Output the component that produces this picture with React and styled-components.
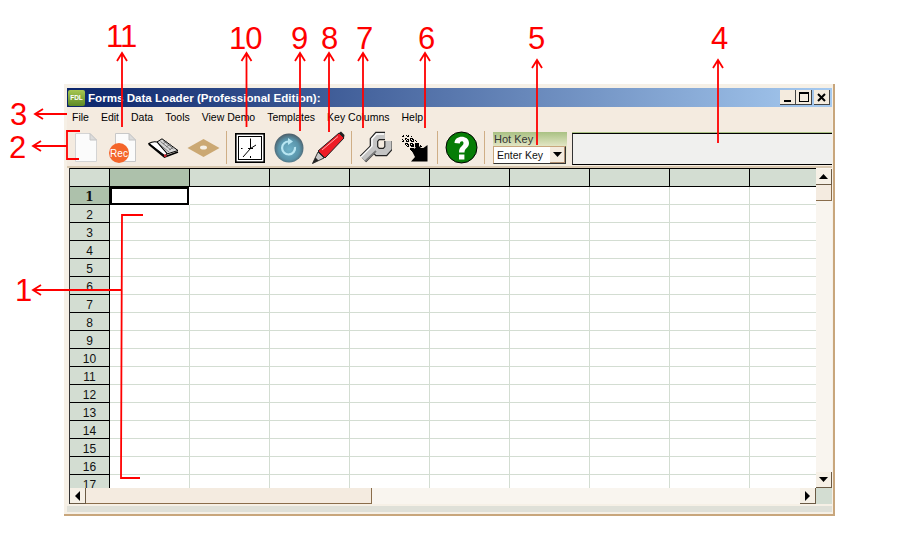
import styled, { createGlobalStyle } from "styled-components";

const GlobalStyle = createGlobalStyle`
  html, body {
    margin: 0;
    padding: 0;
    background: #fff;
  }
`;

const COLS = [0, 1, 2, 3, 4, 5, 6, 7, 8];
const ROWS = Array.from({ length: 17 }, (_, i) => i + 1);
const MENU = ["File", "Edit", "Data", "Tools", "View Demo", "Templates", "Key Columns", "Help"];

const NUMBERS = [
  { n: "11", x: 106, y: 19 },
  { n: "10", x: 229, y: 21 },
  { n: "9", x: 291, y: 21 },
  { n: "8", x: 321, y: 21 },
  { n: "7", x: 356, y: 21 },
  { n: "6", x: 418, y: 21 },
  { n: "5", x: 528, y: 21 },
  { n: "4", x: 711, y: 21 },
  { n: "3", x: 10, y: 97 },
  { n: "2", x: 9, y: 130 },
  { n: "1", x: 15, y: 273 },
];

// speckle for the import icon, dissolving toward the top left
const SPECKLE = [];
for (let y = 1; y < 22; y++) {
  for (let x = 0; x < 22; x++) {
    const band = Math.abs(x - y);
    const hash = (x * 7 + y * 13 + x * y) % 5;
    if (band < 8 && hash < (x + y > 20 ? 4 : x + y > 10 ? 3 : 2)) SPECKLE.push([x, y]);
  }
}

const Page = styled.div`
  position: relative;
  width: 900px;
  height: 560px;
  padding: 84px 0 0 64px;
  box-sizing: border-box;
  overflow: hidden;
  font-family: "Liberation Sans", Arial, sans-serif;
`;

const Window = styled.div`
  width: 771px;
  height: 432px;
  box-sizing: border-box;
  padding: 4px 1px 0 3px;
  background: #f6f0e6;
  border-right: 2px solid #c8a67c;
  border-bottom: 2px solid #c8a67c;
  display: flex;
  flex-direction: column;
`;

const TitleBar = styled.div`
  height: 19px;
  flex: none;
  display: flex;
  align-items: center;
  padding: 0 2px 0 1px;
  background: linear-gradient(90deg, #0a246a, #a6caf0);
`;

const AppIcon = styled.div`
  width: 17px;
  height: 16px;
  border-radius: 2px;
  background: linear-gradient(180deg, #a6c752, #5d8a26);
  color: #fff;
  font-size: 6.5px;
  font-weight: bold;
  line-height: 16px;
  text-align: center;
  flex: none;
`;

const TitleText = styled.div`
  margin-left: 3px;
  color: #fff;
  font-size: 11.6px;
  font-weight: bold;
  white-space: nowrap;
  flex: 1;
`;

const WinButton = styled.div`
  width: 16px;
  height: 15px;
  margin-left: ${(p) => (p.$gap ? "2px" : "0")};
  background: #f4ebde;
  border-right: 1px solid #444;
  border-bottom: 1px solid #444;
  box-sizing: border-box;
  display: flex;
  align-items: center;
  justify-content: center;
`;

const MenuBar = styled.div`
  height: 24px;
  box-sizing: border-box;
  flex: none;
  display: flex;
  align-items: center;
  gap: 12px;
  padding: 0 0 4px 5px;
  background: #f4ebe0;
`;

const MenuItem = styled.span`
  font-size: 10.5px;
  color: #000;
`;

const ToolBar = styled.div`
  height: 35px;
  flex: none;
  display: flex;
  align-items: flex-start;
  background: #f4ebe0;
  border-bottom: 2px solid #d8c8b0;
`;

const Tool = styled.div`
  width: ${(p) => p.$w}px;
  height: 33px;
  margin-left: ${(p) => p.$ml || 0}px;
  flex: none;
  display: flex;
  align-items: center;
  justify-content: center;
`;

const Sep = styled.div`
  width: 1px;
  height: 33px;
  margin-left: ${(p) => p.$ml}px;
  background: #cfae86;
  flex: none;
`;

const HotKey = styled.div`
  width: 74px;
  height: 33px;
  margin: 1px 0 0 8px;
  flex: none;
  display: flex;
  flex-direction: column;
  background: linear-gradient(180deg, #a9c183, #e6e8c8 45%, #f1efdd);
`;

const HotKeyLabel = styled.div`
  height: 14px;
  padding-left: 1px;
  font-size: 11px;
  line-height: 15px;
  color: #333;
`;

const HotKeySelect = styled.div`
  width: 73px;
  height: 18px;
  box-sizing: border-box;
  background: #fff;
  border: 1px solid #c8a67c;
  border-right-color: #333;
  border-bottom-color: #333;
  display: flex;
  align-items: center;
  justify-content: space-between;
  padding-left: 3px;
  font-size: 10.5px;
  color: #111;
`;

const DropButton = styled.div`
  width: 15px;
  height: 16px;
  background: #f4ebde;
  border-right: 1px solid #b09070;
  border-bottom: 1px solid #b09070;
  display: flex;
  align-items: center;
  justify-content: center;
  box-sizing: border-box;
`;

const StatusPanel = styled.div`
  flex: 1;
  height: 32px;
  margin: 2px 0 0 5px;
  background: #f0f0ee;
  border-top: 1px solid #000;
  border-bottom: 1px solid #000;
  border-left: 1px solid #333;
  box-sizing: border-box;
  box-shadow: 0 -1px 0 #a9c183;
`;

const Body = styled.div`
  height: 336px;
  flex: none;
  display: grid;
  grid-template-columns: 746px 16px;
  grid-template-rows: 320px 16px;
  margin-left: 2px;
  border-left: 1px solid #333;
`;

const Sheet = styled.div`
  overflow: hidden;
  background: #fff;
  border-top: 1px solid #000;
  box-sizing: border-box;
`;

const Row = styled.div`
  display: flex;
  height: 18px;
`;

const HeadCell = styled.div`
  width: 79px;
  flex: none;
  height: 17px;
  background: ${(p) => (p.$on ? "#adc1ab" : "#d3ddd2")};
  border-right: 1px solid #000;
  border-bottom: 1px solid #000;
`;

const RowHead = styled.div`
  width: 39px;
  flex: none;
  height: 17px;
  background: ${(p) => (p.$on ? "#adc1ab" : "#d3ddd2")};
  border-right: 1px solid #000;
  border-bottom: 1px solid #000;
  text-align: center;
  font-family: ${(p) => (p.$on ? '"DejaVu Serif", serif' : '"Liberation Sans", sans-serif')};
  font-weight: ${(p) => (p.$on ? "bold" : "normal")};
  font-size: 12px;
  line-height: 20px;
  color: #111;
`;

const Cell = styled.div`
  width: 79px;
  flex: none;
  height: 17px;
  background: #fff;
  border-right: 1px solid #d3ddd2;
  border-bottom: 1px solid #d3ddd2;
`;

const ActiveCell = styled.div`
  width: 79px;
  height: 18px;
  flex: none;
  box-sizing: border-box;
  margin-right: 1px;
  border: 2px solid #000;
  background: #fff;
`;

const VScroll = styled.div`
  background: #f9f5ef;
  display: flex;
  flex-direction: column;
  padding-top: 1px;
`;

const HScroll = styled.div`
  background: #f9f5ef;
  display: flex;
  align-items: stretch;
`;

const ScrollBtn = styled.div`
  width: 16px;
  height: 16px;
  flex: none;
  box-sizing: border-box;
  background: #f6f0e6;
  border-right: 1px solid #6b5a44;
  border-bottom: 1px solid #6b5a44;
  display: flex;
  align-items: center;
  justify-content: center;
`;

const Thumb = styled.div`
  flex: none;
  width: ${(p) => p.$w}px;
  height: 16px;
  box-sizing: border-box;
  background: #f4ebe0;
  border-right: 1px solid #8a6d4b;
  border-bottom: 1px solid #8a6d4b;
`;

const Spacer = styled.div`
  flex: 1;
`;

const Corner = styled.div`
  background: #d3ddd2;
`;

const StatusLine = styled.div`
  height: 6px;
  margin-top: 2px;
  background: #dfe0d8;
`;

const Overlay = styled.svg`
  position: absolute;
  left: 0;
  top: 0;
  pointer-events: none;
`;

const Num = styled.span.attrs((p) => ({ style: { left: p.$x, top: p.$y } }))`
  position: absolute;
  color: #f00;
  font-family: "Liberation Sans", sans-serif;
  font-size: 31px;
  line-height: 36px;
  letter-spacing: -1px;
`;

const Tri = ({ dir }) => {
  const pts = { up: "0,6 4.5,1 9,6", down: "0,1 9,1 4.5,6", left: "6,0 6,10 1,5", right: "1,0 1,10 6,5" }[dir];
  const vert = dir === "up" || dir === "down";
  return (
    <svg width={vert ? 9 : 7} height={vert ? 7 : 10} viewBox={vert ? "0 0 9 7" : "0 0 7 10"}>
      <polygon points={pts} fill="#000" />
    </svg>
  );
};

const DocIcon = () => (
  <svg width="22" height="29" viewBox="0 0 22 29">
    <path d="M.5.5H15L21.5 7V28.5H.5Z" fill="#fbfbfb" stroke="#d4d4d4" />
    <path d="M15 .5V7H21.5Z" fill="#dcdcdc" stroke="#c4c4c4" />
  </svg>
);

const RecIcon = () => (
  <svg width="30" height="30" viewBox="0 0 30 30">
    <path d="M7.5.5H21L27.5 7V28.5H7.5Z" fill="#fbfbfb" stroke="#c8c8c8" />
    <path d="M21 .5V7H27.5Z" fill="#dcdcdc" stroke="#c4c4c4" />
    <circle cx="11" cy="20" r="10" fill="#f4652a" />
    <text x="11" y="24" textAnchor="middle" fontSize="10" fill="#fff" fontFamily="Liberation Sans">Rec</text>
  </svg>
);

const BookIcon = () => (
  <svg width="31" height="20" viewBox="0 0 31 20">
    <path d="M14 .8L30 12.5L19 16L9 4Z" fill="#d8d8d8" stroke="#000" />
    <path d="M12.5 3.5L23 12M15 2.5L25.5 11M11 6L21 14M15 6L19 3M18 9L23 6M21 12L26 9" stroke="#666" strokeWidth=".8" />
    <path d="M.8 5.5C4 3.5 7 3.5 9 4L19 15.5L17 18Z" fill="#fff" stroke="#000" strokeWidth="1.1" />
    <path d="M.8 6L16.5 19L30 14" fill="none" stroke="#000" strokeWidth="1.7" />
    <rect x="16" y="16.5" width="2.4" height="2.4" fill="#c8202c" />
  </svg>
);

const DiamondIcon = () => (
  <svg width="33" height="18" viewBox="0 0 33 18">
    <path d="M16.5 0L32.5 9L16.5 18L.5 9Z" fill="#cba873" />
    <ellipse cx="16.5" cy="8.5" rx="3.5" ry="2" fill="#f6f0e6" />
  </svg>
);

const ClockIcon = () => (
  <svg width="30" height="30" viewBox="0 0 30 30">
    <rect x=".8" y=".8" width="28.4" height="28.4" fill="#fff" stroke="#000" strokeWidth="1.6" />
    <rect x="3.5" y="3.5" width="23" height="23" fill="#fff" stroke="#000" />
    <path d="M15.5 15.5L15.5 5.5M15.5 15.5L21 12M15.5 15.5L8 24" stroke="#000" strokeWidth="1" fill="none" />
    <path d="M13 15.5H18M15.5 23V25M6 15.5H7.5" stroke="#000" />
  </svg>
);

const RefreshIcon = () => (
  <svg width="30" height="30" viewBox="0 0 30 30">
    <defs>
      <radialGradient id="ref" cx=".5" cy=".55" r=".55">
        <stop offset="0" stopColor="#6fb2c8" />
        <stop offset=".65" stopColor="#5a95ab" />
        <stop offset="1" stopColor="#4c5c66" />
      </radialGradient>
    </defs>
    <circle cx="15" cy="15" r="14.5" fill="url(#ref)" />
    <path d="M15 8.5A6.5 6.5 0 1 0 21 14" fill="none" stroke="#b8e6f2" strokeWidth="2.2" />
    <path d="M14 5L19 8.5L14 12Z" fill="#b8e6f2" />
  </svg>
);

const PenIcon = () => (
  <svg width="33" height="33" viewBox="0 0 33 33">
    <path d="M.5 32.5L6 21L12 27Z" fill="#c8c8c8" stroke="#222" strokeWidth=".9" />
    <path d="M.5 32.5L3.5 26.5L6.5 29.5Z" fill="#222" />
    <path d="M6 20L27 2L32 7L13 27Z" fill="#ee1c25" stroke="#222" />
    <path d="M10 19L26 5.5" stroke="#ffb0b0" />
    <path d="M27 2L29 .5L32.5 4L32 7Z" fill="#222" />
  </svg>
);

const WrenchIcon = () => (
  <svg width="34" height="33" viewBox="0 0 34 33">
    <g fill="none" strokeLinejoin="miter">
      <path d="M5 28L16 17" stroke="#222" strokeWidth="9" />
      <path d="M27 5H19.5L16 9V17L19.5 21H27L30.5 17V10" stroke="#222" strokeWidth="8.6" />
      <path d="M5 28L16 17" stroke="#c4c4c4" strokeWidth="6.6" />
      <path d="M27 5H19.5L16 9V17L19.5 21H27L30.5 17V10" stroke="#c4c4c4" strokeWidth="6.2" />
      <path d="M2.5 26.5L14 15V8L18.5 3H26" stroke="#fff" strokeWidth="1.4" />
      <path d="M7 30.5L18 20" stroke="#7a7a7a" strokeWidth="1.8" />
    </g>
  </svg>
);

const ImportIcon = () => (
  <svg width="26" height="28" viewBox="0 0 26 28">
    <path d="M25.5 11V27.5H9L13 23L10 17L16 11L20 15Z" fill="#000" />
    {SPECKLE.map(([x, y]) => (
      <rect key={x + "-" + y} x={x} y={y} width="1" height="1" fill="#000" />
    ))}
  </svg>
);

const HelpIcon = () => (
  <svg width="33" height="33" viewBox="0 0 33 33">
    <circle cx="16.5" cy="16.5" r="15.5" fill="#067d06" stroke="#000" />
    <path d="M9.5 12C9.5 3.5 24 3.5 24 12C24 17 19.5 17 19.5 21.5H14C14 15 18.5 15.5 18.5 12C18.5 9.5 15 9.5 14.8 12.5Z" fill="#fff" />
    <rect x="14" y="23.5" width="5.4" height="5" fill="#fff" />
  </svg>
);

const Annotations = () => (
  <Overlay width="900" height="560" viewBox="0 0 900 560">
    <g fill="none" stroke="#f00" strokeWidth="1.8">
      <path d="M122 53V127M117 61L122 53L127 61" />
      <path d="M246.5 53V127M241.5 61L246.5 53L251.5 61" />
      <path d="M300 53V131M295 61L300 53L305 61" />
      <path d="M329 53V132M324 61L329 53L334 61" />
      <path d="M363 53V128M358 61L363 53L368 61" />
      <path d="M425 53V128M420 61L425 53L430 61" />
      <path d="M537 60V145M532 68L537 60L542 68" />
      <path d="M718 60V143M713 68L718 60L723 68" />
      <path d="M35 114H67M43 109L35 114L43 119" />
      <path d="M33 146H67M41 141L33 146L41 151" />
      <path d="M80 131H67V159H79" />
      <path d="M33 290H122M41 285L33 290L41 295" />
      <path d="M143 215H122L121 478H140" />
    </g>
  </Overlay>
);

const App = () => {
  return (
    <Page>
      <GlobalStyle />
      <Window>
        <TitleBar>
          <AppIcon>FDL</AppIcon>
          <TitleText>Forms Data Loader (Professional Edition):</TitleText>
          <WinButton>
            <svg width="9" height="9" viewBox="0 0 9 9"><rect x="1" y="7" width="7" height="2" fill="#000" /></svg>
          </WinButton>
          <WinButton>
            <svg width="10" height="10" viewBox="0 0 10 10"><rect x=".5" y="1" width="9" height="8.5" fill="none" stroke="#000" /><rect y="0" width="10" height="2" fill="#000" /></svg>
          </WinButton>
          <WinButton $gap>
            <svg width="9" height="9" viewBox="0 0 9 9"><path d="M1 1L8 8M8 1L1 8" stroke="#000" strokeWidth="2" /></svg>
          </WinButton>
        </TitleBar>
        <MenuBar>
          {MENU.map((m) => (
            <MenuItem key={m}>{m}</MenuItem>
          ))}
        </MenuBar>
        <ToolBar>
          <Tool $w={22} $ml={8}><DocIcon /></Tool>
          <Tool $w={30} $ml={11}><RecIcon /></Tool>
          <Tool $w={31} $ml={10}><BookIcon /></Tool>
          <Tool $w={33} $ml={8}><DiamondIcon /></Tool>
          <Sep $ml={6} />
          <Tool $w={30} $ml={8}><ClockIcon /></Tool>
          <Tool $w={30} $ml={9}><RefreshIcon /></Tool>
          <Tool $w={33} $ml={8}><PenIcon /></Tool>
          <Sep $ml={6} />
          <Tool $w={34} $ml={6}><WrenchIcon /></Tool>
          <Tool $w={26} $ml={10}><ImportIcon /></Tool>
          <Sep $ml={9} />
          <Tool $w={33} $ml={7}><HelpIcon /></Tool>
          <Sep $ml={6} />
          <HotKey>
            <HotKeyLabel>Hot Key</HotKeyLabel>
            <HotKeySelect>
              Enter Key
              <DropButton><Tri dir="down" /></DropButton>
            </HotKeySelect>
          </HotKey>
          <StatusPanel />
        </ToolBar>
        <Body>
          <Sheet>
            <Row>
              <RowHead />
              {COLS.map((c) => (
                <HeadCell key={c} $on={c === 0} />
              ))}
            </Row>
            {ROWS.map((r) => (
              <Row key={r}>
                <RowHead $on={r === 1}>{r}</RowHead>
                {COLS.map((c) =>
                  r === 1 && c === 0 ? <ActiveCell key={c} /> : <Cell key={c} />
                )}
              </Row>
            ))}
          </Sheet>
          <VScroll>
            <ScrollBtn><Tri dir="up" /></ScrollBtn>
            <Thumb $w={16} />
            <Spacer />
            <ScrollBtn><Tri dir="down" /></ScrollBtn>
          </VScroll>
          <HScroll>
            <ScrollBtn><Tri dir="left" /></ScrollBtn>
            <Thumb $w={286} />
            <Spacer />
            <ScrollBtn><Tri dir="right" /></ScrollBtn>
          </HScroll>
          <Corner />
        </Body>
        <StatusLine />
      </Window>
      <Annotations />
      {NUMBERS.map((a) => (
        <Num key={a.n} $x={a.x} $y={a.y}>{a.n}</Num>
      ))}
    </Page>
  );
};

export default App;
